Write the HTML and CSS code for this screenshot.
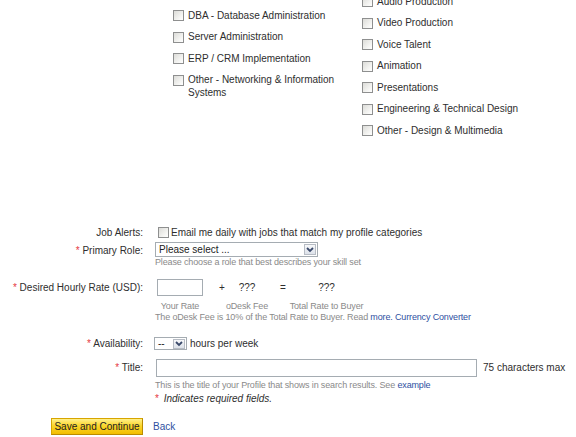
FILE: index.html
```html
<!DOCTYPE html>
<html>
<head>
<meta charset="utf-8">
<link rel="stylesheet" href="styles.css">
</head>
<body>
<div class="page">
  <div class="cats">
    <ul class="col col-left">
      <li><span class="cb"></span><span>DBA - Database Administration</span></li>
      <li><span class="cb"></span><span>Server Administration</span></li>
      <li><span class="cb"></span><span>ERP / CRM Implementation</span></li>
      <li><span class="cb"></span><span>Other - Networking &amp; Information Systems</span></li>
    </ul>
    <ul class="col col-right">
      <li><span class="cb"></span><span>Audio Production</span></li>
      <li><span class="cb"></span><span>Video Production</span></li>
      <li><span class="cb"></span><span>Voice Talent</span></li>
      <li><span class="cb"></span><span>Animation</span></li>
      <li><span class="cb"></span><span>Presentations</span></li>
      <li><span class="cb"></span><span>Engineering &amp; Technical Design</span></li>
      <li><span class="cb"></span><span>Other - Design &amp; Multimedia</span></li>
    </ul>
  </div>

  <div class="form">
    <div class="row row-alerts">
      <div class="lbl">Job Alerts:</div>
      <div class="fld fld-alerts"><span class="cb cb-alert"></span><span>Email me daily with jobs that match my profile categories</span></div>
    </div>

    <div class="row row-role">
      <div class="lbl lbl-role"><span class="req">*</span> Primary Role:</div>
      <div class="fld fld-col">
        <div class="select select-role"><span>Please select ...</span><span class="arrow"><svg width="8" height="6" viewBox="0 0 8 6"><path d="M1 1 L4 4 L7 1" fill="none" stroke="#3b4a6b" stroke-width="1.8"/></svg></span></div>
        <div class="hint">Please choose a role that best describes your skill set</div>
      </div>
    </div>

    <div class="row row-rate">
      <div class="lbl lbl-rate"><span class="req">*</span> Desired Hourly Rate (USD):</div>
      <div class="fld fld-col">
        <div class="rate-top">
          <div class="c c1"><span class="input input-rate"></span></div>
          <div class="c c2">+</div>
          <div class="c c3">???</div>
          <div class="c c4">=</div>
          <div class="c c5">???</div>
        </div>
        <div class="rate-labels hint">
          <div class="l l1">Your Rate</div>
          <div class="l l2">oDesk Fee</div>
          <div class="l l3">Total Rate to Buyer</div>
        </div>
        <div class="hint">The oDesk Fee is 10% of the Total Rate to Buyer. Read <a class="link">more.</a> <a class="link">Currency Converter</a></div>
      </div>
    </div>

    <div class="row row-avail">
      <div class="lbl"><span class="req">*</span> Availability:</div>
      <div class="fld fld-avail">
        <div class="select select-avail"><span>--</span><span class="arrow"><svg width="8" height="6" viewBox="0 0 8 6"><path d="M1 1 L4 4 L7 1" fill="none" stroke="#3b4a6b" stroke-width="1.8"/></svg></span></div>
        <span>hours per week</span>
      </div>
    </div>

    <div class="row row-title">
      <div class="lbl lbl-title"><span class="req">*</span> Title:</div>
      <div class="fld fld-title">
        <span class="input input-title"></span>
        <span class="max">75 characters max</span>
      </div>
    </div>

    <div class="sub sub-hint hint">This is the title of your Profile that shows in search results. See <a class="link">example</a></div>
    <div class="sub sub-req"><span class="req">*</span> <em>Indicates required fields.</em></div>

    <div class="row row-btn">
      <div class="lbl lbl-btn"><button class="btn">Save and Continue</button></div>
      <a class="link back">Back</a>
    </div>
  </div>
</div>
</body>
</html>
```

FILE: styles.css
```css
html, body {
  margin: 0;
  padding: 0;
  background: #fff;
}
body {
  font-family: "Liberation Sans", Arial, sans-serif;
  font-size: 10px;
  color: #2e2e2e;
}
.page {
  width: 576px;
  height: 437px;
  overflow: hidden;
}

/* category lists */
.cats {
  display: flex;
  height: 220px;
  padding-left: 173px;
  box-sizing: border-box;
}
.col {
  list-style: none;
  margin: 0;
  padding: 0;
}
.col-left {
  width: 189px;
  margin-top: 8.5px;
}
.col-right {
  margin-top: -5.5px;
}
.col li {
  display: flex;
  gap: 4px;
  line-height: 13px;
  padding-bottom: 8.5px;
}
.col-left li:last-child span:last-child {
  width: 168px;
}
.cb {
  flex: none;
  display: inline-block;
  width: 9px;
  height: 9px;
  border: 1px solid #8e8f8f;
  background: linear-gradient(135deg, #dcdcd8 0%, #f6f6f4 70%, #ffffff 100%);
  margin-top: 1.5px;
}

/* form */
.form {
  display: flex;
  flex-direction: column;
}
.row {
  display: flex;
}
.lbl {
  flex: none;
  width: 143px;
  margin-right: 12px;
  text-align: right;
  white-space: nowrap;
}
.req {
  color: #e5383f;
}
.hint {
  font-size: 9px;
  letter-spacing: -0.15px;
  color: #8a8a8a;
  line-height: 11px;
  white-space: nowrap;
}
.link {
  color: #2e4f9f;
  text-decoration: none;
}
.fld-col {
  display: flex;
  flex-direction: column;
}

.row-alerts {
  margin-top: 5.5px;
  line-height: 13px;
}
.fld-alerts {
  display: flex;
  align-items: center;
}
.cb-alert {
  margin: 0 2px 0 3px;
}

.row-role {
  margin-top: 3.5px;
}
.lbl-role {
  line-height: 15px;
  padding-top: 1px;
}
.select {
  display: flex;
  align-items: center;
  justify-content: space-between;
  box-sizing: border-box;
  border: 1px solid #a5acb2;
  background: #fff;
  color: #222;
  padding-left: 3px;
}
.select-role {
  width: 163px;
  height: 15px;
}
.arrow {
  flex: none;
  display: flex;
  align-items: center;
  justify-content: center;
  box-sizing: border-box;
  width: 12px;
  height: 11px;
  margin-right: 1px;
  border: 1px solid #b7bcc4;
  background: linear-gradient(#f7f8fa, #dde2ea);
}

.row-rate {
  margin-top: 11px;
}
.lbl-rate {
  line-height: 17px;
}
.rate-top {
  display: flex;
  height: 17px;
  align-items: center;
  white-space: nowrap;
}
.c {
  display: flex;
  justify-content: center;
  color: #2e2e2e;
}
.c1 { width: 50px; }
.c2 { width: 34px; }
.c3 { width: 16px; }
.c4 { width: 56px; }
.c5 { width: 31px; }
.input {
  display: block;
  box-sizing: border-box;
  border: 1px solid #a5acb2;
  background: #fff;
}
.input-rate {
  width: 46px;
  height: 17px;
}
.rate-labels {
  display: flex;
  margin-top: 5px;
}
.l {
  text-align: center;
}
.l1 { width: 50px; }
.l2 { width: 84px; }
.l3 { width: 75px; }

.row-avail {
  margin-top: 14px;
  line-height: 13px;
}
.fld-avail {
  display: flex;
  align-items: center;
  margin-left: -1px;
}
.select-avail {
  width: 33px;
  height: 13px;
  margin-right: 3px;
  padding-left: 3px;
}
.select-avail .arrow {
  height: 10px;
  margin-right: 1px;
}

.row-title {
  margin-top: 8px;
}
.lbl-title {
  line-height: 18px;
  padding-top: 1px;
}
.fld-title {
  display: flex;
  align-items: center;
  margin-left: 1px;
}
.input-title {
  width: 321px;
  height: 18px;
}
.max {
  margin-left: 6px;
  white-space: nowrap;
}

.sub {
  padding-left: 155px;
}
.sub-hint {
  margin-top: 2.5px;
}
.sub-req {
  margin-top: 1px;
  line-height: 13px;
}
.sub-req em {
  margin-left: 2px;
}

.row-btn {
  margin-top: 13.5px;
  align-items: center;
}
.lbl-btn {
  display: flex;
  justify-content: flex-end;
}
.btn {
  box-sizing: border-box;
  width: 92px;
  height: 17px;
  padding: 0;
  margin: 0;
  font-family: "Liberation Sans", Arial, sans-serif;
  font-size: 10px;
  color: #222;
  border: 1px solid #d7a500;
  border-right-color: #b98b00;
  border-bottom-color: #b98b00;
  background: linear-gradient(#fff08a 0%, #fbd62b 45%, #f2bd00 100%);
}
.back {
  margin-left: -2px;
  line-height: 17px;
}
```
